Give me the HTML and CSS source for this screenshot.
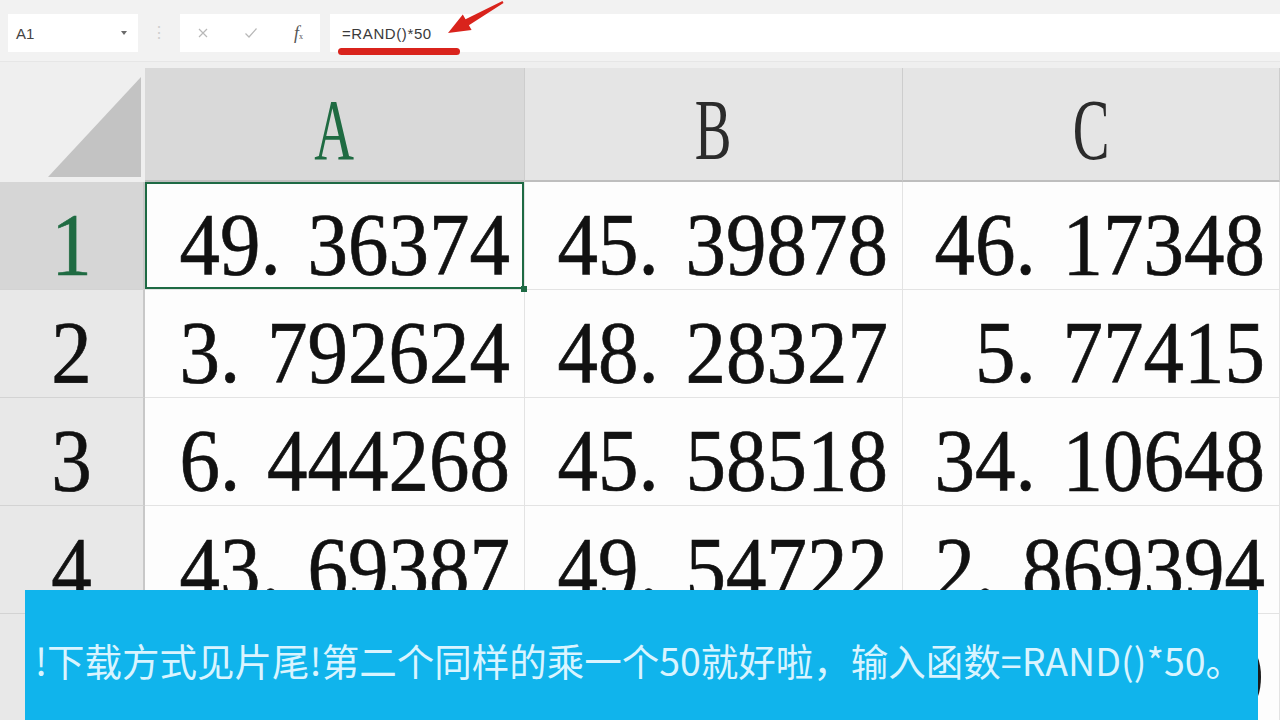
FILE: index.html
```html
<!DOCTYPE html>
<html lang="zh-CN">
<head>
<meta charset="utf-8">
<title>RAND</title>
<link rel="stylesheet" href="styles.css">
</head>
<body>
<div class="app">
  <div class="toolbar">
    <div class="namebox"><span>A1</span><span class="caret"></span></div>
    <div class="sep">⋮</div>
    <div class="fnbox">
      <svg class="ico" width="12" height="12" viewBox="0 0 12 12"><path d="M2 2 L10 10 M10 2 L2 10" stroke="#b8b8b8" stroke-width="1.2" fill="none"/></svg>
      <svg class="ico" width="14" height="12" viewBox="0 0 14 12"><path d="M1.5 6.5 L5 10 L12.5 1.5" stroke="#b8b8b8" stroke-width="1.2" fill="none"/></svg>
      <span class="fx"><i>f</i><span class="fxx">x</span></span>
    </div>
    <div class="formula">=RAND()*50</div>
  </div>

  <div class="sheet">
    <div class="corner"><svg width="93" height="100" viewBox="0 0 93 100"><polygon points="0,100 93,100 93,0" fill="#c3c3c3"/></svg></div>
    <div class="colhead sel"><span class="glyph">A</span></div>
    <div class="colhead"><span class="glyph">B</span></div>
    <div class="colhead"><span class="glyph">C</span></div>

    <div class="rowhead sel"><span class="num">1</span></div>
    <div class="cell active"><span class="num">49<span class="dot">.</span>36374</span></div>
    <div class="cell"><span class="num">45<span class="dot">.</span>39878</span></div>
    <div class="cell"><span class="num">46<span class="dot">.</span>17348</span></div>

    <div class="rowhead"><span class="num">2</span></div>
    <div class="cell"><span class="num">3<span class="dot">.</span>792624</span></div>
    <div class="cell"><span class="num">48<span class="dot">.</span>28327</span></div>
    <div class="cell"><span class="num">5<span class="dot">.</span>77415</span></div>

    <div class="rowhead"><span class="num">3</span></div>
    <div class="cell"><span class="num">6<span class="dot">.</span>444268</span></div>
    <div class="cell"><span class="num">45<span class="dot">.</span>58518</span></div>
    <div class="cell"><span class="num">34<span class="dot">.</span>10648</span></div>

    <div class="rowhead"><span class="num">4</span></div>
    <div class="cell"><span class="num">43<span class="dot">.</span>69387</span></div>
    <div class="cell"><span class="num">49<span class="dot">.</span>54722</span></div>
    <div class="cell"><span class="num">2<span class="dot">.</span>869394</span></div>

    <div class="rowhead"></div>
    <div class="cell"></div>
    <div class="cell"></div>
    <div class="cell"><span class="peek"></span></div>
  </div>

  <svg class="arrow" width="520" height="60" viewBox="0 0 520 60">
    <polygon points="448,33 471.6,30 468.9,25.2 503.5,2.9 502.5,1.1 465.5,19.2 462.8,14.4" fill="#d9231c"/>
  </svg>
  <div class="underline"></div>

  <div class="caption">!下载方式见片尾!第二个同样的乘一个50就好啦，输入函数=RAND()*50。</div>
</div>
</body>
</html>
```

FILE: styles.css
```css
* { box-sizing: border-box; margin: 0; padding: 0; }
html, body { width: 1280px; height: 720px; overflow: hidden; }
body { background: #f1f1f1; font-family: "Liberation Sans", Arial, sans-serif; }

.app { position: relative; width: 1280px; height: 720px; overflow: hidden; }

/* toolbar */
.toolbar {
  height: 62px;
  display: flex;
  align-items: flex-start;
  padding: 14px 0 0 8px;
  background: #f2f2f2;
  border-bottom: 1px solid #e6e6e6;
}
.namebox {
  width: 130px; height: 38px;
  background: #fff;
  display: flex; align-items: center; justify-content: space-between;
  padding: 0 11px 0 8px;
  font-size: 15px; color: #444;
}
.caret {
  width: 0; height: 0;
  border-left: 3.5px solid transparent;
  border-right: 3.5px solid transparent;
  border-top: 4px solid #6a6a6a;
}
.sep { width: 42px; height: 38px; line-height: 38px; text-align: center; color: #cfcfcf; font-size: 16px; }
.fnbox {
  width: 140px; height: 38px;
  background: #fff;
  display: flex; align-items: center; justify-content: space-between;
  padding: 0 17px 0 17px;
}
.fx { font-family: "Liberation Serif", serif; color: #555; font-size: 18px; line-height: 1; }
.fx i { font-style: italic; }
.fxx { font-size: 8px; font-style: normal; }
.formula {
  flex: 1;
  margin-left: 10px;
  height: 38px;
  background: #fff;
  display: flex; align-items: center;
  padding-left: 12px;
  font-size: 15px; color: #3a3a3a;
  letter-spacing: 0.6px;
}

/* sheet */
.sheet {
  display: grid;
  grid-template-columns: 145px 380px 378px 377px;
  grid-template-rows: 114px repeat(5, 108px);
  padding-top: 6px;
  background: #efefef;
}
.corner {
  background: #efefef;
  display: flex; align-items: flex-end; justify-content: flex-end;
  padding: 0 4px 5px 0;
}
.colhead {
  background: #e5e5e5;
  border-right: 1px solid #cdcdcd;
  border-bottom: 2px solid #bebebe;
  display: flex; justify-content: center; align-items: flex-start;
  padding-top: 24px;
}
.colhead.sel { background: #d9d9d9; }
.glyph {
  display: inline-block;
  font-family: "Liberation Serif", serif;
  font-size: 81px; line-height: 81px;
  color: #2b2b2b;
  transform: scale(0.68, 1.07);
  transform-origin: 50% 84%;
}
.colhead.sel .glyph { color: #1f6b42; }

.rowhead {
  background: #e8e8e8;
  border-right: 2px solid #c8c8c8;
  border-bottom: 1px solid #d3d3d3;
  display: flex; justify-content: center; align-items: flex-start;
  padding-top: 25px;
}
.rowhead.sel { background: #d6d6d6; }
.rowhead.sel .num { color: #1f6b42; -webkit-text-stroke-color: #1f6b42; }

.cell {
  background: #fdfdfd;
  border-right: 1px solid #e3e3e3;
  border-bottom: 1px solid #e3e3e3;
  display: flex; justify-content: flex-end; align-items: flex-start;
  padding: 25px 14px 0 0;
}
.cell.active {
  position: relative;
  z-index: 1;
  box-shadow: inset 0 0 0 2px #1e6a44;
}
.cell.active::after {
  content: "";
  position: absolute;
  right: -3px; bottom: -3px;
  width: 6px; height: 6px;
  background: #1e6a44;
}
.num {
  display: inline-block;
  font-family: "Liberation Serif", serif;
  font-size: 81px; line-height: 81px;
  color: #111;
  -webkit-text-stroke: 0.6px #111;
  transform: scaleY(1.1);
  transform-origin: 50% 84%;
  white-space: nowrap;
}
.dot { display: inline-block; width: 0.58em; }

/* fragment of the hidden row-5 value peeking past the caption */
.peek {
  width: 22px; height: 56px;
  margin-top: 10px;
  margin-right: 4px;
  border: 4px solid #1a1a1a;
  border-left-color: transparent;
  border-radius: 50%;
}

/* annotations */
.arrow { position: absolute; left: 0; top: 0; }
.underline {
  position: absolute;
  left: 338px; top: 48px;
  width: 122px; height: 7px;
  border-radius: 4px;
  background: #d9231c;
}

.caption {
  position: absolute;
  left: 25px; top: 590px;
  width: 1233px; height: 140px;
  background: #10b4ec;
  color: #d9f4ff;
  font-family: "Noto Sans CJK SC", "Noto Sans", sans-serif;
  font-size: 37.5px;
  line-height: 50px;
  padding: 45px 0 0 10px;
  white-space: nowrap;
}
```
